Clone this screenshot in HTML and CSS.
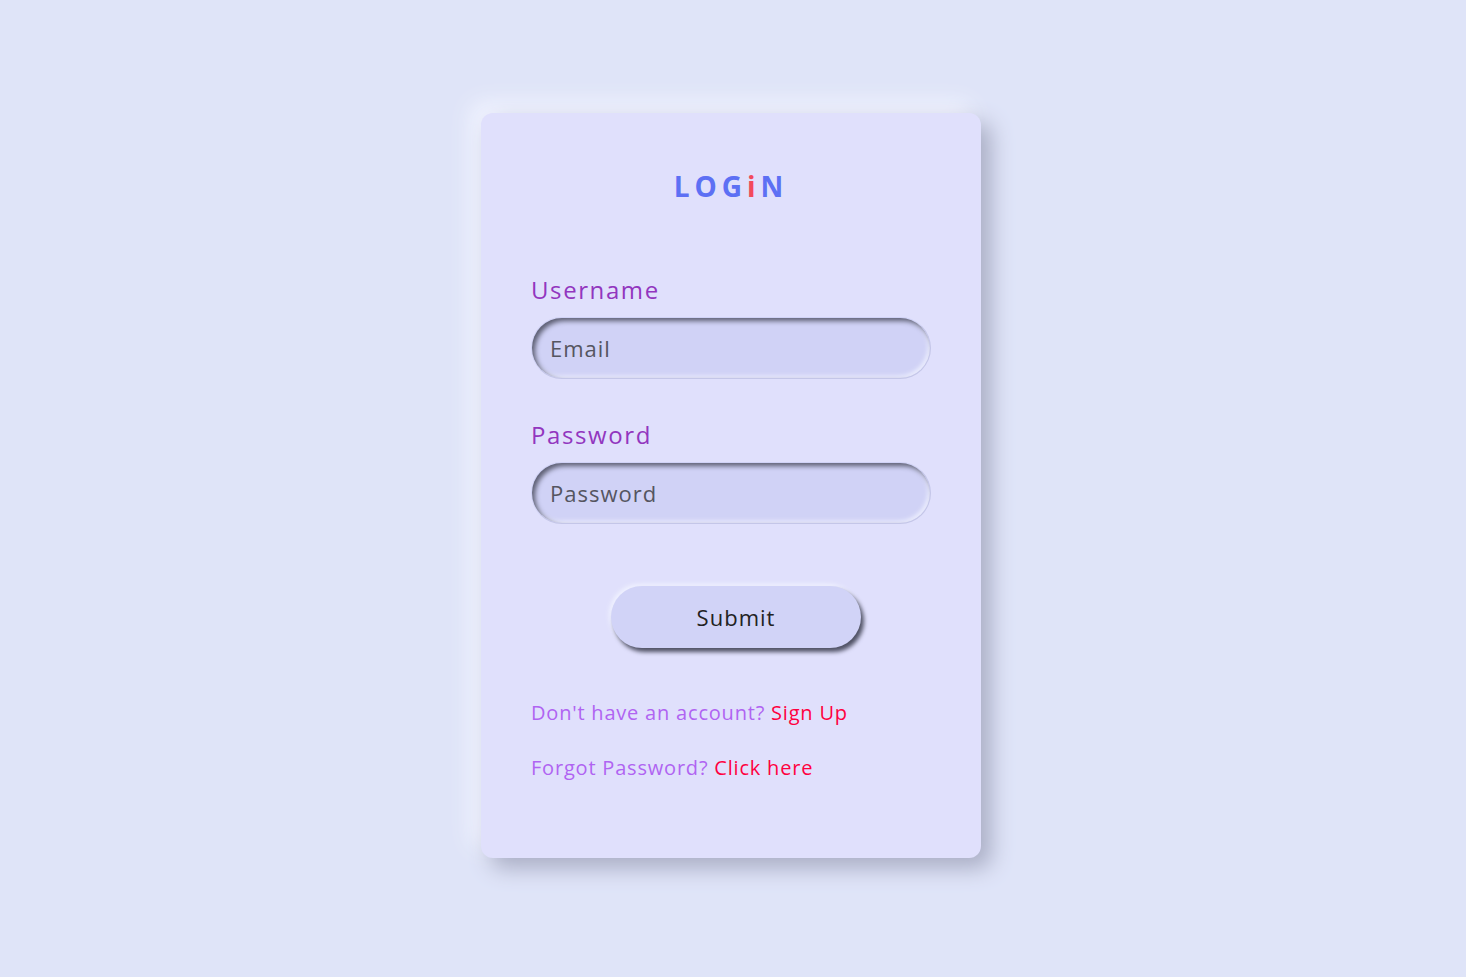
FILE: index.html
```html
<!DOCTYPE html>
<html lang="en">
<head>
<meta charset="utf-8">
<title>Login</title>
<link rel="stylesheet" href="styles.css">
</head>
<body>
<main class="page">
  <form class="card" onsubmit="return false">
    <h1 class="title">LOG<span class="title-i">i</span>N</h1>
    <div class="field">
      <label class="label" for="user">Username</label>
      <input class="input" id="user" type="text" placeholder="Email">
    </div>
    <div class="field">
      <label class="label" for="pass">Password</label>
      <input class="input" id="pass" type="password" placeholder="Password">
    </div>
    <div class="actions">
      <button class="submit" type="submit">Submit</button>
    </div>
    <p class="note">Don't have an account? <a class="link" href="#">Sign Up</a></p>
    <p class="note">Forgot Password? <a class="link" href="#">Click here</a></p>
  </form>
</main>
</body>
</html>
```
FILE: styles.css
```css
* { box-sizing: border-box; }
html, body { margin: 0; height: 100%; }
body {
  background: #dfe4f8;
  font-family: "Open Sans", "DejaVu Sans", sans-serif;
}
.page {
  display: flex;
  justify-content: center;
  padding-top: 113px;
  padding-right: 4px;
}
.card {
  width: 500px;
  height: 745px;
  background: #e0e0fc;
  border-radius: 12px;
  padding: 54px 50px 0;
  box-shadow: 10px 10px 22px #a9adc4, -10px -10px 22px #f3f5ff;
}
.title {
  margin: 0 0 69px;
  text-align: center;
  font-size: 28px;
  font-weight: 700;
  letter-spacing: 5px;
  color: #5d70f4;
  padding-right: 0;
}
.title-i { color: #f24a5c; }
.field { display: flex; flex-direction: column; margin-bottom: 40px; }
.label {
  font-size: 24px;
  color: #9236bf;
  margin-bottom: 11px;
  line-height: 32px;
  letter-spacing: 1.6px;
}
.input {
  width: 400px;
  height: 62px;
  border-radius: 31px;
  border: 1px solid #c4c6e8;
  border-top-color: transparent;
  border-left-color: transparent;
  background: #d0d2f6;
  padding: 0 18px;
  font-family: inherit;
  font-size: 22px;
  letter-spacing: 1px;
  color: #444;
  outline: none;
  box-shadow: inset 3px 3px 5px #5c5e72, inset -2px -2px 4px #eef0ff;
}
.input::placeholder { color: #555560; }
.actions { display: flex; justify-content: center; margin-top: 62px; padding-left: 10px; }
.submit {
  width: 250px;
  height: 62px;
  border-radius: 31px;
  border: none;
  background: #d1d3f7;
  font-family: inherit;
  font-size: 22px;
  letter-spacing: 1px;
  color: #222;
  box-shadow: 3px 4px 4px #505265, -2px -2px 4px #f0f2ff;
}
.note {
  margin: 52px 0 0;
  font-size: 20px;
  color: #b064f2;
  line-height: 26px;
  letter-spacing: 0.8px;
}
.note + .note { margin-top: 29px; }
.link { color: #ff0040; text-decoration: none; }
```
